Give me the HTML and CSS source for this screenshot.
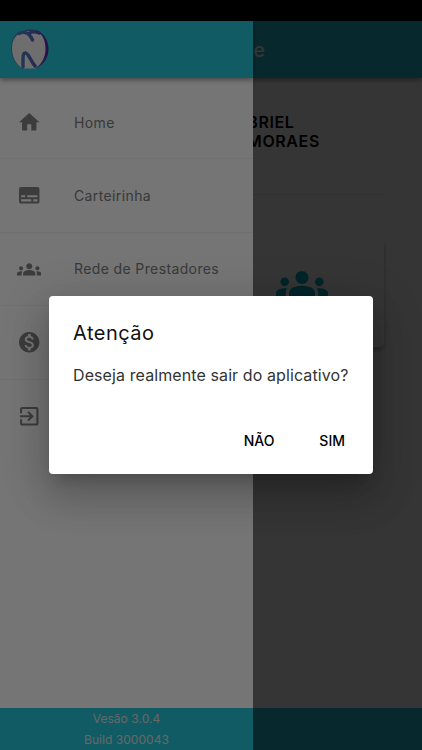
FILE: index.html
```
<!DOCTYPE html>
<html lang="pt-BR">

<head>
    <meta charset="UTF-8">
    <title>Home</title>
    <link rel="stylesheet" href="styles.css">
</head>

<body>

    <div class="status-bar"></div>

    <div class="app">
        <header class="app-bar">
            <h1>Home</h1>
        </header>

        <main class="content">
            <div class="user">
                <p>GABRIEL</p>
                <p>DE MORAES</p>
            </div>
            <div class="card">
                <svg viewBox="0 0 24 24"><path d="M12 12.75c1.63 0 3.07.39 4.24.9 1.08.48 1.76 1.56 1.76 2.73V18H6v-1.61c0-1.18.68-2.26 1.76-2.73 1.17-.52 2.61-.91 4.24-.91zM4 13c1.1 0 2-.9 2-2s-.9-2-2-2-2 .9-2 2 .9 2 2 2zm1.13 1.1c-.37-.06-.74-.1-1.13-.1-.99 0-1.93.21-2.78.58C.48 14.9 0 15.62 0 16.43V18h4.5v-1.61c0-.83.23-1.61.63-2.29zM20 13c1.1 0 2-.9 2-2s-.9-2-2-2-2 .9-2 2 .9 2 2 2zm4 3.43c0-.81-.48-1.53-1.22-1.85-.85-.37-1.79-.58-2.78-.58-.39 0-.76.04-1.13.1.4.68.63 1.46.63 2.29V18H24v-1.57zM12 6c1.66 0 3 1.34 3 3s-1.34 3-3 3-3-1.34-3-3 1.34-3 3-3z"/></svg>
            </div>
        </main>

        <footer class="bottom-bar"></footer>
        <div class="scrim"></div>

        <!-- Menu lateral -->
        <aside class="drawer">
            <div class="drawer-header">
                <svg class="logo" viewBox="0 0 39 41">
                    <defs>
                        <linearGradient id="marca" gradientUnits="userSpaceOnUse" x1="0" x2="38" y1="0" y2="0">
                            <stop offset="0" stop-color="#3a98a8"/>
                            <stop offset=".3" stop-color="#4a78bc"/>
                            <stop offset=".65" stop-color="#565fb8"/>
                            <stop offset="1" stop-color="#5a1fa8"/>
                        </linearGradient>
                    </defs>
                    <path class="edge" d="M14 1.500C5 3 1 10 1 19c0 9 4 17 12 20h13c8-3 12.500-11 12.500-19S34 4 27 1.500c-4-1.200-9-1.200-13 0z"/>
                    <path class="tooth" d="M14 3C6 4 2 11 2 19c0 9 4 17 11 20.500h12c6.500-4 10.500-11 10.500-19.500 0-8-2.500-14-8-17-4-1.200-9-1.200-13.500 0z"/>
                    <path class="line" d="M9 4.500c6-2.500 10-1 13.500 6.500M19 4.500c3-2 6-2.500 10-.5M13 38c0-10-.5-14 2.500-14s5 8 9.500 13"/>
                </svg>
            </div>
            <nav class="menu">
                <a href="#">
                    <svg viewBox="0 0 24 24"><path d="M10 20v-6h4v6h5v-8h3L12 3 2 12h3v8z"/></svg>
                    <span>Home</span>
                </a>
                <a href="#">
                    <svg viewBox="0 0 24 24"><path d="M20 4H4c-1.100 0-2 .9-2 2v12c0 1.100.9 2 2 2h16c1.100 0 2-.9 2-2V6c0-1.100-.9-2-2-2zM4 12h4v2H4v-2zm10 6H4v-2h10v2zm6 0h-4v-2h4v2zm0-4H10v-2h10v2z"/></svg>
                    <span>Carteirinha</span>
                </a>
                <a href="#">
                    <svg viewBox="0 0 24 24"><path d="M12 12.75c1.63 0 3.07.39 4.24.9 1.08.48 1.76 1.56 1.76 2.73V18H6v-1.61c0-1.18.68-2.26 1.76-2.73 1.17-.52 2.61-.91 4.24-.91zM4 13c1.1 0 2-.9 2-2s-.9-2-2-2-2 .9-2 2 .9 2 2 2zm1.13 1.1c-.37-.06-.74-.1-1.13-.1-.99 0-1.93.21-2.78.58C.48 14.9 0 15.62 0 16.43V18h4.5v-1.61c0-.83.23-1.61.63-2.29zM20 13c1.1 0 2-.9 2-2s-.9-2-2-2-2 .9-2 2 .9 2 2 2zm4 3.43c0-.81-.48-1.53-1.22-1.85-.85-.37-1.79-.58-2.78-.58-.39 0-.76.04-1.13.1.4.68.63 1.46.63 2.29V18H24v-1.57zM12 6c1.66 0 3 1.34 3 3s-1.34 3-3 3-3-1.34-3-3 1.34-3 3-3z"/></svg>
                    <span>Rede de Prestadores</span>
                </a>
                <a href="#">
                    <svg viewBox="0 0 24 24"><path d="M12 2C6.480 2 2 6.480 2 12s4.480 10 10 10 10-4.480 10-10S17.520 2 12 2zm1.410 16.090V20h-2.670v-1.930c-1.710-.36-3.160-1.460-3.270-3.400h1.960c.1 1.050.82 1.870 2.650 1.870 1.960 0 2.400-.98 2.400-1.590 0-.83-.44-1.610-2.670-2.140-2.480-.6-4.180-1.620-4.180-3.670 0-1.720 1.390-2.840 3.110-3.210V4h2.670v1.950c1.860.45 2.790 1.860 2.850 3.390H14.300c-.05-1.110-.64-1.870-2.220-1.870-1.500 0-2.400.68-2.400 1.640 0 .84.65 1.390 2.670 1.910s4.180 1.390 4.180 3.910c-.01 1.830-1.380 2.830-3.120 3.160z"/></svg>
                </a>
                <a href="#">
                    <svg viewBox="0 0 24 24"><path d="M10.090 15.590L11.500 17l5-5-5-5-1.410 1.410L12.670 11H3v2h9.670l-2.580 2.590zM19 3H5c-1.110 0-2 .9-2 2v4h2V5h14v14H5v-4H3v4c0 1.100.89 2 2 2h14c1.100 0 2-.9 2-2V5c0-1.100-.9-2-2-2z"/></svg>
                </a>
            </nav>
            <div class="version">
                <p>Vesão 3.0.4</p>
                <p>Build 3000043</p>
            </div>
        </aside>
        <div class="scrim"></div>
    </div>

    <!-- Confirmação de saída -->
    <div class="dialog" role="alertdialog">
        <h2>Atenção</h2>
        <p>Deseja realmente sair do aplicativo?</p>
        <div class="actions">
            <button>NÃO</button>
            <button>SIM</button>
        </div>
    </div>

</body>

</html>
```
FILE: styles.css
```
* {
    box-sizing: border-box;
}

body {
    font-family: Inter, Roboto, sans-serif;
    background-color: black;
    margin: 0;
    height: 750px;
    overflow: hidden;
    position: relative;
}

h1, h2, p {
    margin: 0;
}

.status-bar {
    height: 21px;
    background-color: black;
}

.app {
    height: 729px;
    background-color: white;
    position: relative;
    display: flex;
    flex-direction: column;
    overflow: hidden;
}

.app-bar {
    height: 57px;
    flex: none;
    background-color: #26c6da;
    box-shadow: 0 2px 5px rgba(0, 0, 0, 0.4);
    display: flex;
    align-items: center;
    justify-content: flex-end;
    padding-right: 157px;
}

.app-bar h1 {
    font-size: 20px;
    font-weight: 500;
    color: white;
}

.content {
    flex: 1;
    padding: 0 38px;
}

.user {
    height: 117px;
    padding-top: 35px;
    border-bottom: 1px solid #e8e8e8;
    font-size: 16px;
    font-weight: 600;
    line-height: 19px;
    letter-spacing: 0.6px;
}

.user p {
    width: max-content;
    margin-left: 185px;
}

.user p + p {
    margin-left: 182px;
}

.card {
    width: 163px;
    height: 107px;
    margin: 45px 0 0 auto;
    border-radius: 4px;
    background-color: white;
    box-shadow: 0 3px 5px rgba(0, 0, 0, 0.3);
    padding: 18px 0 0 55px;
}

.card svg {
    width: 52px;
    height: 52px;
    fill: #00acc1;
}

.bottom-bar {
    height: 42px;
    background-color: #26c6da;
}

.scrim {
    position: absolute;
    inset: 0;
    background-color: rgba(0, 0, 0, 0.54);
}

.drawer {
    position: absolute;
    top: 0;
    left: 0;
    width: 253px;
    height: 100%;
    background-color: white;
    display: flex;
    flex-direction: column;
}

.drawer-header {
    height: 57px;
    background-color: #26c6da;
    box-shadow: 0 2px 5px rgba(0, 0, 0, 0.4);
    padding: 8px 10px;
}

.logo {
    display: block;
    width: 39px;
    height: 41px;
}

.tooth {
    fill: #f0f0f0;
}

.edge {
    fill: url(#marca);
}

.line {
    fill: none;
    stroke: url(#marca);
    stroke-width: 3.4;
    stroke-linecap: round;
}

.menu {
    flex: 1;
    padding-top: 8px;
}

.menu a {
    height: 73.4px;
    display: flex;
    align-items: center;
    gap: 33px;
    padding-left: 16.500px;
    border-bottom: 1px solid #f3f3f3;
    color: #7c7c7c;
    font-size: 14px;
    font-weight: 400;
    letter-spacing: 0.38px;
    text-decoration: none;
}

.menu a:last-child {
    border-bottom: none;
}

.menu svg {
    width: 24.500px;
    height: 24.500px;
    fill: #838383;
}

.version {
    height: 42px;
    padding-top: 1px;
    background-color: #26c6da;
    color: #e0e0e0;
    font-size: 12px;
    line-height: 20.500px;
    letter-spacing: 0.05px;
    text-align: center;
}

.dialog {
    position: absolute;
    top: 296px;
    left: 49px;
    width: 324px;
    height: 178px;
    padding: 24px;
    background-color: white;
    border-radius: 4px;
    box-shadow: 0 11px 15px -7px rgba(0, 0, 0, 0.2), 0 24px 38px 3px rgba(0, 0, 0, 0.14), 0 9px 46px 8px rgba(0, 0, 0, 0.12);
    display: flex;
    flex-direction: column;
}

.dialog h2 {
    font-size: 20px;
    font-weight: 400;
    line-height: 26px;
    letter-spacing: 0.5px;
    color: #111;
}

.dialog p {
    margin-top: 19px;
    font-size: 16px;
    line-height: 20px;
    letter-spacing: 0.1px;
    white-space: nowrap;
    color: #333;
}

.actions {
    display: flex;
    justify-content: flex-end;
    gap: 45px;
    margin-top: 46px;
    padding-right: 4px;
}

.actions button {
    border: none;
    background: none;
    padding: 0;
    font-family: inherit;
    font-size: 14px;
    font-weight: 500;
    line-height: 20px;
    color: black;
}
```
